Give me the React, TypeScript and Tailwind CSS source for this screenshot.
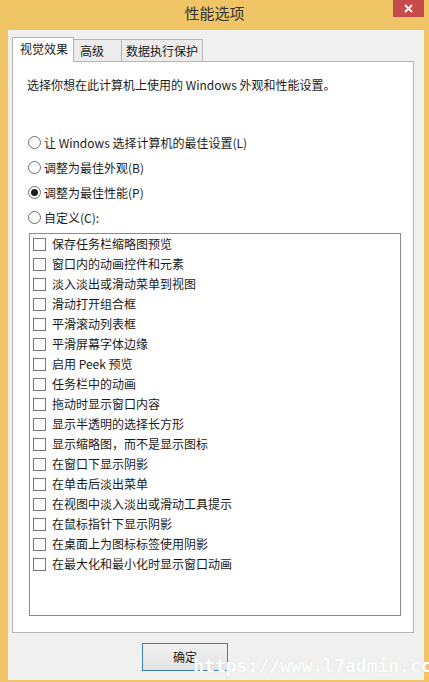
import React from 'react'

const effects = [
  '保存任务栏缩略图预览',
  '窗口内的动画控件和元素',
  '淡入淡出或滑动菜单到视图',
  '滑动打开组合框',
  '平滑滚动列表框',
  '平滑屏幕字体边缘',
  '启用 Peek 预览',
  '任务栏中的动画',
  '拖动时显示窗口内容',
  '显示半透明的选择长方形',
  '显示缩略图，而不是显示图标',
  '在窗口下显示阴影',
  '在单击后淡出菜单',
  '在视图中淡入淡出或滑动工具提示',
  '在鼠标指针下显示阴影',
  '在桌面上为图标标签使用阴影',
  '在最大化和最小化时显示窗口动画',
]

const radios = [
  { label: '让 Windows 选择计算机的最佳设置(L)', checked: false },
  { label: '调整为最佳外观(B)', checked: false },
  { label: '调整为最佳性能(P)', checked: true },
  { label: '自定义(C):', checked: false },
]

function Radio({ label, checked }: { label: string; checked: boolean }) {
  return (
    <div className="flex items-center h-[25px]">
      <span className="w-[13px] h-[13px] rounded-full border border-[#6e6e6e] bg-white flex items-center justify-center">
        {checked && <span className="w-[7px] h-[7px] rounded-full bg-[#1f1f1f]" />}
      </span>
      <span className="ml-[3px]">{label}</span>
    </div>
  )
}

export default function App() {
  return (
    <div
      className="relative w-[429px] h-[682px] bg-[#f0c566] flex flex-col overflow-hidden text-[12px] text-[#1a1a1a]"
      style={{ fontFamily: '"Noto Sans CJK SC", "Noto Sans", sans-serif' }}
    >
      {/* title bar */}
      <div className="relative h-[30px] flex items-start justify-center pt-[3px]">
        <span className="text-[15px] leading-[20px] text-[#333]">性能选项</span>
        <div className="absolute right-[5px] top-0 w-[31px] h-[17px] bg-[#c74a4d] flex items-center justify-center">
          <svg width="9" height="9" viewBox="0 0 9 9">
            <path d="M1 1L8 8M8 1L1 8" stroke="#fff" strokeWidth="1.8" />
          </svg>
        </div>
      </div>

      {/* window body */}
      <div className="flex-1 ml-[8px] mr-[5px] mb-[2px] bg-[#f0f0f0] flex flex-col pl-[4px] pr-[10px] pt-[7px]">
        <div className="flex items-end h-[24px] leading-[16px]">
          <div className="relative z-10 w-[62px] h-[25px] -mb-px bg-white border border-b-0 border-[#b5b5b5] pl-[7px] pt-[3px]">
            视觉效果
          </div>
          <div className="w-[48px] h-[22px] border border-b-0 border-l-0 border-[#b5b5b5] bg-[#ececec] pl-[6px] pt-[3px]">
            高级
          </div>
          <div className="w-[81px] h-[22px] border border-b-0 border-l-0 border-[#b5b5b5] bg-[#ececec] pl-[4px] pt-[3px]">
            数据执行保护
          </div>
        </div>

        <div className="h-[572px] bg-white border border-[#b5b5b5] flex flex-col pt-[15px]">
          <p className="pl-[14px] leading-[16px]">选择你想在此计算机上使用的 Windows 外观和性能设置。</p>

          <div className="pl-[15px] mt-[37px] flex flex-col">
            {radios.map((r) => (
              <Radio key={r.label} label={r.label} checked={r.checked} />
            ))}
          </div>

          <div className="ml-[16px] mr-[12px] mt-[3px] h-[383px] border border-[#8a8a8a] flex flex-col">
            {effects.map((e) => (
              <div key={e} className="flex items-center h-[20px] pl-[3px]">
                <span className="w-[13px] h-[13px] border border-[#7a7a7a] bg-white" />
                <span className="ml-[6px]">{e}</span>
              </div>
            ))}
          </div>
        </div>

        <div className="flex mt-[10px] pl-[130px]">
          <button className="w-[86px] h-[28px] border border-[#3d7bad] bg-gradient-to-b from-[#f2f2f2] to-[#e3e3e3] text-[12px] text-[#1a1a1a]">
            确定
          </button>
        </div>
      </div>

      {/* watermark */}
      <span
        className="absolute left-[193px] top-[652px] text-[18px] font-bold text-white whitespace-nowrap"
        style={{
          fontFamily: '"DejaVu Sans Mono", monospace',
          textShadow: '0 0 1px rgba(0,0,0,0.2), 0.5px 0 0 #fff',
        }}
      >
        https://www.l7admin.cc
      </span>
    </div>
  )
}
